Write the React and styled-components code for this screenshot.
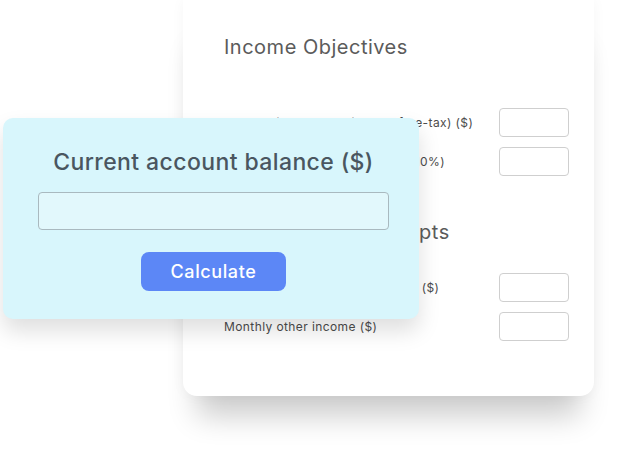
import React from 'react';
import styled, { createGlobalStyle } from 'styled-components';

const GlobalStyle = createGlobalStyle`
  html, body {
    margin: 0;
    padding: 0;
    background: #ffffff;
    overflow: hidden;
  }
  body {
    font-family: Inter, "Noto Sans", sans-serif;
  }
`;

const Stage = styled.div`
  position: relative;
  width: 626px;
  height: 456px;
  overflow: hidden;
`;

const BackCard = styled.div`
  margin-left: 183px;
  width: 411px;
  box-sizing: border-box;
  padding: 34px 25px 55px 41px;
  background: #ffffff;
  border-radius: 0 0 14px 14px;
  box-shadow: 0 34px 28px -14px rgba(0, 0, 0, 0.2), 0 0 14px rgba(0, 0, 0, 0.04);
`;

const SectionTitle = styled.h2`
  margin: ${({ $top }) => $top || 0}px 0 0;
  font-size: 20px;
  line-height: 26px;
  font-weight: 400;
  letter-spacing: 0.5px;
  color: #5b5b5b;
`;

const Rows = styled.div`
  display: flex;
  flex-direction: column;
  gap: 10px;
  margin-top: ${({ $top }) => $top}px;
`;

const Row = styled.div`
  display: flex;
  align-items: center;
  justify-content: space-between;
`;

const Label = styled.span`
  font-size: 12px;
  letter-spacing: 0.4px;
  color: #4c4c4c;
`;

const SmallInput = styled.input`
  width: 70px;
  height: 29px;
  box-sizing: border-box;
  border: 1px solid #cfcfcf;
  border-radius: 4px;
  background: #fff;
`;

const FrontCard = styled.div`
  position: absolute;
  left: 3px;
  top: 118px;
  width: 416px;
  box-sizing: border-box;
  padding: 29px 30px 28px 35px;
  display: flex;
  flex-direction: column;
  align-items: center;
  background: #d8f6fc;
  border-radius: 10px;
  box-shadow: 0 12px 22px rgba(0, 0, 0, 0.13);
`;

const BalanceTitle = styled.h1`
  margin: 0;
  font-size: 23px;
  line-height: 30px;
  font-weight: 500;
  letter-spacing: 0.4px;
  color: #4a5660;
`;

const BalanceInput = styled.input`
  margin-top: 15px;
  width: 351px;
  height: 38px;
  box-sizing: border-box;
  border: 1px solid #a9b9bf;
  border-radius: 4px;
  background: #e2f8fc;
`;

const CalcButton = styled.button`
  margin-top: 22px;
  width: 145px;
  height: 39px;
  border: none;
  border-radius: 8px;
  background: #5c87f6;
  color: #ffffff;
  font-family: inherit;
  font-size: 18px;
  font-weight: 500;
  letter-spacing: 0.6px;
`;

const objectives = [
  'Monthly income required (before-tax) ($)',
  'Expected inflation rate (default 10%)',
];

const receipts = ['Monthly superannuation income ($)', 'Monthly other income ($)'];

export default function App() {
  return (
    <Stage>
      <GlobalStyle />
      <BackCard>
        <SectionTitle>Income Objectives</SectionTitle>
        <Rows $top={48}>
          {objectives.map((l) => (
            <Row key={l}>
              <Label>{l}</Label>
              <SmallInput />
            </Row>
          ))}
        </Rows>
        <SectionTitle $top={43}>Other Income Receipts</SectionTitle>
        <Rows $top={28}>
          {receipts.map((l) => (
            <Row key={l}>
              <Label>{l}</Label>
              <SmallInput />
            </Row>
          ))}
        </Rows>
      </BackCard>
      <FrontCard>
        <BalanceTitle>Current account balance ($)</BalanceTitle>
        <BalanceInput />
        <CalcButton>Calculate</CalcButton>
      </FrontCard>
    </Stage>
  );
}
